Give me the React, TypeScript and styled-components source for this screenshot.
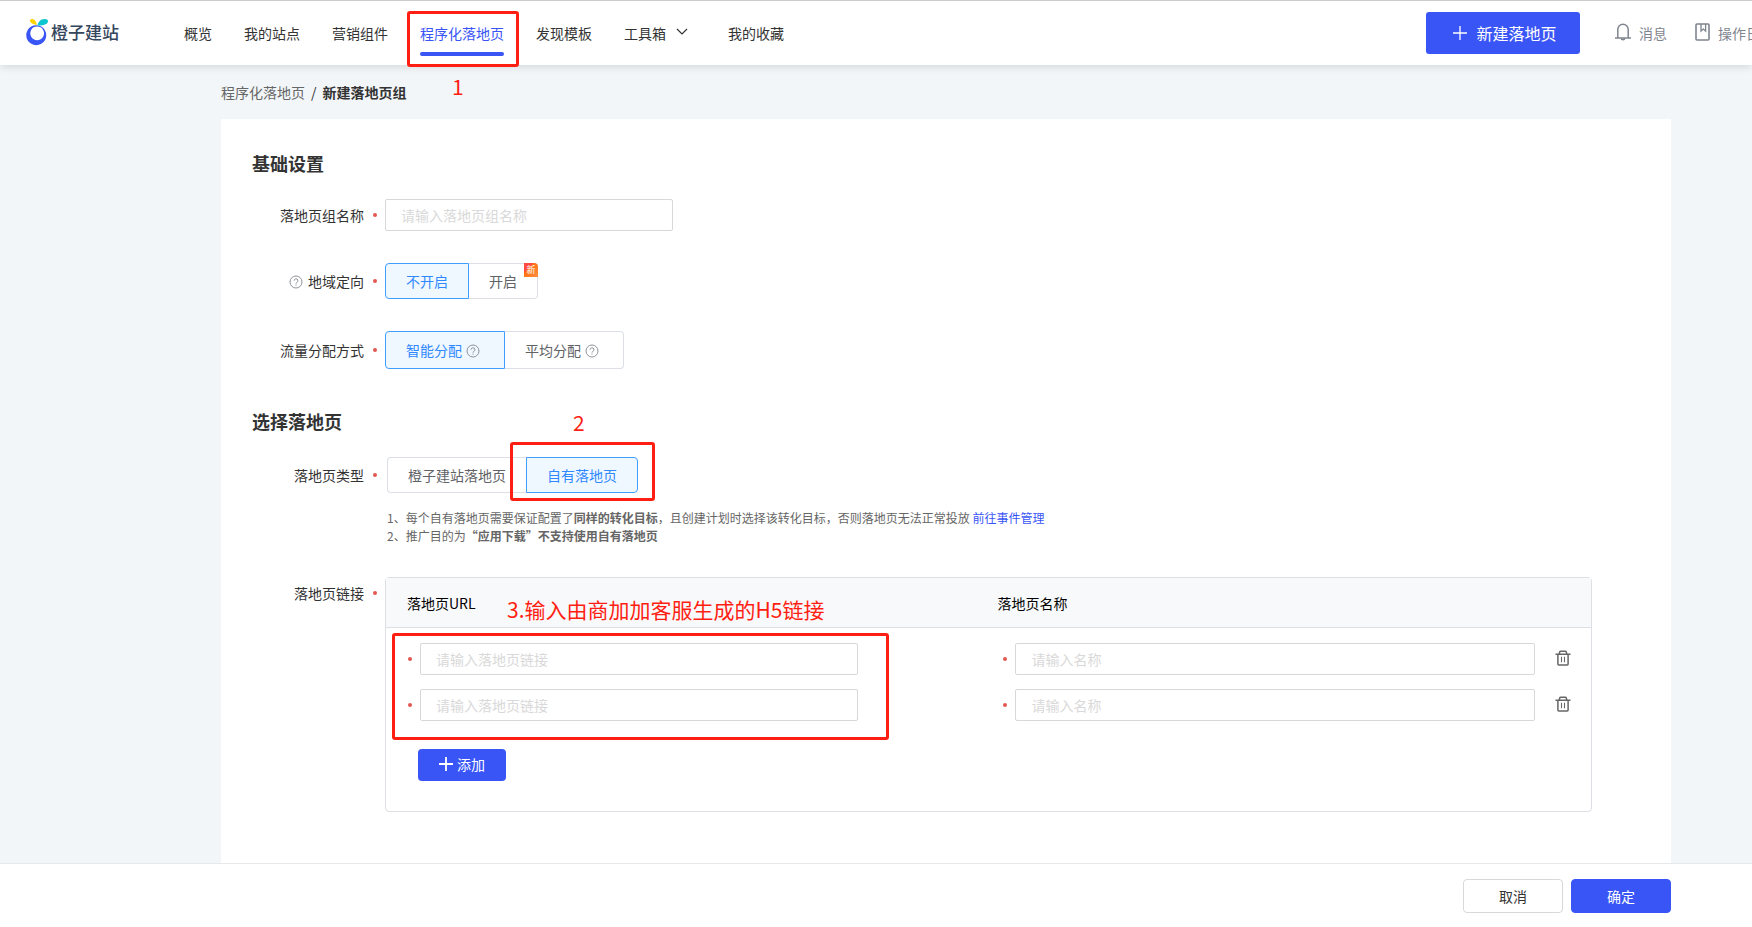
import React, { useState } from 'react';
import styled, { createGlobalStyle, css } from 'styled-components';

const BLUE = '#3955f6';
const RED = '#ff1f12';

const GlobalStyle = createGlobalStyle`
  * { box-sizing: border-box; }
  body {
    margin: 0;
    background: #f2f6f9;
    color: #333;
    font-family: "Noto Sans CJK SC", "Liberation Sans", sans-serif;
    font-size: 14px;
    line-height: 20px;
  }
  button, input { font-family: inherit; font-size: 14px; line-height: 20px; }
  button { cursor: pointer; }
  a { text-decoration: none; }
`;

const Page = styled.div`
  display: flex;
  flex-direction: column;
  min-height: 100vh;
`;

/* ---------- header ---------- */

const Header = styled.header`
  position: relative;
  z-index: 1;
  background: #fff;
  border-top: 1px solid #ccc;
  box-shadow: 0 2px 8px rgba(0, 0, 0, 0.12);
`;

const HeaderClip = styled.div`
  overflow: hidden;
`;

const HeaderInner = styled.div`
  display: flex;
  align-items: center;
  min-width: 1800px;
  height: 64px;
  padding: 0 26px 0 25px;
`;

const Logo = styled.a`
  display: flex;
  align-items: center;
  gap: 2px;
  width: 159px;
  padding-bottom: 2px;
  color: #34465c;
  font-size: 17px;
  font-weight: 500;
`;

const Nav = styled.nav`
  display: flex;
  align-items: center;
  gap: 32px;
  height: 64px;
`;

const NavLink = styled.a<{ $active?: boolean; $menu?: boolean }>`
  position: relative;
  display: flex;
  align-items: center;
  gap: 10px;
  height: 64px;
  color: ${(p) => (p.$active ? BLUE : '#333')};
  ${(p) => p.$menu && css`padding-right: 8px;`}
  svg { margin-bottom: 2px; }
  ${(p) =>
    p.$active &&
    css`
      &::after {
        content: '';
        position: absolute;
        left: 0;
        right: 0;
        bottom: 9px;
        height: 4px;
        border-radius: 2px;
        background: ${BLUE};
      }
    `}
`;

const HeaderTools = styled.div`
  display: flex;
  align-items: center;
  margin-left: auto;
`;

const CreateButton = styled.button`
  display: flex;
  align-items: center;
  justify-content: center;
  gap: 9px;
  width: 154px;
  height: 42px;
  margin-right: 35px;
  padding: 0 0 0 4px;
  border: 0;
  border-radius: 3px;
  background: ${BLUE};
  color: #fff;
  font-size: 16px;
`;

const ToolLink = styled.a`
  display: flex;
  align-items: center;
  gap: 8px;
  color: #7f858f;
  & + & { margin-left: 28px; }
  svg { margin-bottom: 2px; }
`;

/* ---------- content ---------- */

const Main = styled.main`
  display: flex;
  flex: 1;
  flex-direction: column;
  padding: 0 81px 0 221px;
`;

const Breadcrumb = styled.nav`
  display: flex;
  gap: 6px;
  padding: 17px 0;
  a { color: #666; }
`;

const Card = styled.div`
  flex: 1;
  padding: 31px 79px 51px 0;
  background: #fff;
`;

const SectionTitle = styled.h2`
  margin: 0 0 23px;
  padding-left: 31px;
  font-size: 18px;
  line-height: 26px;
  font-weight: 700;
`;

const Section = styled.section`
  & + & { margin-top: 39px; }
`;

const FieldRow = styled.div`
  display: flex;
  & + & { margin-top: 32px; }
`;

const FieldLabel = styled.div<{ $height?: number }>`
  display: flex;
  flex: none;
  align-items: center;
  justify-content: flex-end;
  width: 164px;
  height: ${(p) => p.$height ?? 32}px;
  padding-right: 8px;
  svg { margin-top: 2px; }
`;

const LabelText = styled.label`
  margin: 0 9px 0 5px;
`;

const Dot = styled.i`
  flex: none;
  width: 4px;
  height: 4px;
  border-radius: 50%;
  background: #e25850;
`;

const FieldBody = styled.div<{ $indent?: boolean }>`
  flex: 1;
  min-width: 0;
  padding-left: ${(p) => (p.$indent ? 2 : 0)}px;
`;

const TextInput = styled.input<{ $width: string }>`
  display: block;
  width: ${(p) => p.$width};
  height: 32px;
  padding: 0 15px;
  border: 1px solid #d8d8d8;
  border-radius: 2px;
  outline: 0;
  background: #fff;
  color: #333;
  &::placeholder { color: #d9d9d9; opacity: 1; }
  &:focus { border-color: ${BLUE}; }
`;

const Segmented = styled.div`
  display: flex;
`;

const Segment = styled.label<{ $height: number }>`
  position: relative;
  display: flex;
  align-items: center;
  height: ${(p) => p.$height}px;
  padding: 0 20px 1px;
  border: 1px solid #dcdfe6;
  color: #606266;
  cursor: pointer;
  & + & { border-left: 0; }
  &:first-of-type { border-radius: 4px 0 0 4px; }
  &:last-of-type { border-radius: 0 4px 4px 0; }
  &:has(+ label input:checked) { border-right: 0; }
  &:has(input:checked) {
    border: 1px solid #409eff;
    background: #f0f8ff;
    color: #2f88ff;
  }
  input {
    position: absolute;
    margin: 0;
    opacity: 0;
  }
  svg { margin: 2px 4px 0; }
`;

const NewBadge = styled.span`
  position: absolute;
  top: -1px;
  right: -1px;
  width: 14px;
  height: 14px;
  border-radius: 0 4px 0 0;
  background: linear-gradient(135deg, #ff4a42 35%, #ff6f10 35%, #ff9040);
  color: #fff;
  font-size: 9px;
  line-height: 14px;
  text-align: center;
`;

const Hint = styled.p`
  margin: 16px 0 0;
  color: #666;
  font-size: 12px;
  line-height: 18px;
  a { color: ${BLUE}; }
`;

/* ---------- link table ---------- */

const TableBox = styled.div`
  position: relative;
  padding-bottom: 30px;
  border: 1px solid #dcdfe3;
  border-radius: 4px;
`;

const LinkTable = styled.table`
  width: 100%;
  table-layout: fixed;
  border-collapse: separate;
  border-spacing: 0;
  th {
    height: 50px;
    padding: 0 21px;
    border-bottom: 1px solid #dcdfe3;
    background: #f8f9fb;
    color: #000;
    font-weight: 400;
    text-align: left;
  }
  td { padding: 7px 0; }
  tbody tr:first-child td { padding-top: 15px; }
  .url { width: 49%; }
  .actions { width: 56px; }
`;

const RequiredCell = styled.div<{ $left: number; $right: number }>`
  display: flex;
  align-items: center;
  gap: 8px;
  padding: 0 ${(p) => p.$right}px 0 ${(p) => p.$left}px;
`;

const IconButton = styled.button`
  display: flex;
  margin-left: 20px;
  padding: 0 0 2px;
  border: 0;
  background: none;
  color: #666;
`;

const AddButton = styled.button`
  display: flex;
  align-items: center;
  justify-content: center;
  gap: 4px;
  width: 88px;
  height: 32px;
  margin: 21px 0 0 32px;
  padding: 0 0 2px;
  border: 0;
  border-radius: 4px;
  background: ${BLUE};
  color: #fff;
`;

/* ---------- footer ---------- */

const Footer = styled.footer`
  display: flex;
  align-items: center;
  justify-content: flex-end;
  gap: 8px;
  height: 64px;
  padding-right: 81px;
  border-top: 1px solid #e6e8ea;
  background: #fff;
`;

const FooterButton = styled.button<{ $primary?: boolean }>`
  width: 100px;
  height: 34px;
  padding: 0;
  border: 1px solid ${(p) => (p.$primary ? BLUE : '#d8d8d8')};
  border-radius: 4px;
  background: ${(p) => (p.$primary ? BLUE : '#fff')};
  color: ${(p) => (p.$primary ? '#fff' : '#333')};
`;

/* ---------- tutorial marks laid over the page ---------- */

const Mark = styled.span<{ $top: number; $left: number; $width: string; $height: number }>`
  position: absolute;
  z-index: 2;
  top: ${(p) => p.$top}px;
  left: ${(p) => p.$left}px;
  width: ${(p) => p.$width};
  height: ${(p) => p.$height}px;
  border: 3px solid ${RED};
  border-radius: 3px;
  pointer-events: none;
`;

const MarkText = styled.span<{ $top: number; $left: number }>`
  position: absolute;
  z-index: 2;
  top: ${(p) => p.$top}px;
  left: ${(p) => p.$left}px;
  color: ${RED};
  font-size: 21px;
  line-height: 24px;
  white-space: nowrap;
  pointer-events: none;
`;

const MarkAnchor = styled.div`
  position: relative;
`;

/* ---------- icons ---------- */

const LogoIcon = () => (
  <svg width="24" height="28" viewBox="0 0 24 28" aria-hidden="true">
    <path
      fill={BLUE}
      fillRule="evenodd"
      d="M11.2 7.2a10 10 0 1 0 .1 0zM12.2 8.4a6.900 6.900 0 1 1-.1 0z"
    />
    <path fill="#ffd400" d="M5 2.400C5.400.600 8 .600 9.600 1.900c1.600 1.400 2 3.400 2.100 5.100C9.600 6.400 4.600 5.200 5 2.400z" />
    <path fill="#0bc6cf" d="M12.400 7.600C13.200 3.800 15.600.800 20 1c3 .2 3.500 2 2.600 3.600-1.500 2.600-5.600 3-10.200 3z" />
  </svg>
);

const HelpIcon = () => (
  <svg width="14" height="14" viewBox="0 0 14 14" fill="none" stroke="#909399" aria-hidden="true">
    <circle cx="7" cy="7" r="6" />
    <path d="M5.100 5.700a1.900 1.900 0 1 1 2.700 1.700c-.6.300-.8.600-.8 1.200" />
    <path d="M7 9.600v1.100" />
  </svg>
);

const ChevronIcon = () => (
  <svg width="12" height="8" viewBox="0 0 12 8" fill="none" stroke="#333" strokeWidth="1.200" aria-hidden="true">
    <path d="M1 1l5 5 5-5" />
  </svg>
);

const PlusIcon = ({ size, stroke }: { size: number; stroke: number }) => (
  <svg width={size} height={size} viewBox="0 0 14 14" stroke="#fff" strokeWidth={stroke} aria-hidden="true">
    <path d="M7 0v14M0 7h14" />
  </svg>
);

const BellIcon = () => (
  <svg width="16" height="18" viewBox="0 0 16 18" fill="none" stroke="currentColor" strokeWidth="1.500" aria-hidden="true">
    <path d="M2.800 15V6.500a5.200 5.200 0 0 1 10.400 0V15M0 15h16" />
    <path d="M6.300 15.200a1.700 1.500 0 0 0 3.400 0" />
  </svg>
);

const BookIcon = () => (
  <svg width="15" height="18" viewBox="0 0 15 18" fill="none" stroke="currentColor" strokeWidth="1.600" aria-hidden="true">
    <rect x="1" y="1" width="13" height="16" rx="1" />
    <path d="M6 1v7l2.300-2 2.300 2V1" strokeWidth="1.300" />
  </svg>
);

const TrashIcon = () => (
  <svg width="16" height="16" viewBox="0 0 16 16" fill="none" stroke="currentColor" strokeWidth="1.500" aria-hidden="true">
    <path d="M.5 4.200h15M4.200 4l.600-2.200q.2-.6.800-.6h4.800q.6 0 .8.600l.6 2.200M2.900 4.200V14q0 .9.900.9h8.400q.9 0 .9-.9V4.200" />
    <path d="M6.500 6.800v5.400M9.500 6.800v5.400" strokeWidth="1.100" />
  </svg>
);

/* ---------- parts ---------- */

type Option = { value: string; help?: boolean; isNew?: boolean };

function RadioGroup({ name, label, options, initial, height = 36 }: {
  name: string;
  label: string;
  options: Option[];
  initial: string;
  height?: number;
}) {
  const [value, setValue] = useState(initial);
  return (
    <Segmented role="radiogroup" aria-label={label}>
      {options.map((o) => (
        <Segment key={o.value} $height={height}>
          <input type="radio" name={name} checked={value === o.value} onChange={() => setValue(o.value)} />
          {o.value}
          {o.help && <HelpIcon />}
          {o.isNew && <NewBadge>新</NewBadge>}
        </Segment>
      ))}
    </Segmented>
  );
}

const LinkRow = ({ onRemove }: { onRemove: () => void }) => (
  <tr>
    <td>
      <RequiredCell $left={22} $right={118}>
        <Dot />
        <TextInput $width="100%" placeholder="请输入落地页链接" aria-label="落地页URL" />
      </RequiredCell>
    </td>
    <td>
      <RequiredCell $left={27} $right={0}>
        <Dot />
        <TextInput $width="100%" placeholder="请输入名称" aria-label="落地页名称" />
      </RequiredCell>
    </td>
    <td>
      <IconButton type="button" aria-label="删除" onClick={onRemove}>
        <TrashIcon />
      </IconButton>
    </td>
  </tr>
);

export default function App() {
  const [rows, setRows] = useState([1, 2]);

  return (
    <Page>
      <GlobalStyle />
      <Header>
        <HeaderClip>
          <HeaderInner>
            <Logo href="#">
              <LogoIcon />
              橙子建站
            </Logo>
            <Nav>
              <NavLink href="#">概览</NavLink>
              <NavLink href="#">我的站点</NavLink>
              <NavLink href="#">营销组件</NavLink>
              <NavLink href="#" $active>程序化落地页</NavLink>
              <NavLink href="#">发现模板</NavLink>
              <NavLink href="#" $menu>
                工具箱
                <ChevronIcon />
              </NavLink>
              <NavLink href="#">我的收藏</NavLink>
            </Nav>
            <HeaderTools>
              <CreateButton type="button">
                <PlusIcon size={14} stroke={1.3} />
                新建落地页
              </CreateButton>
              <ToolLink href="#">
                <BellIcon />
                消息
              </ToolLink>
              <ToolLink href="#">
                <BookIcon />
                操作日志
              </ToolLink>
            </HeaderTools>
          </HeaderInner>
        </HeaderClip>
        <Mark $top={10} $left={407} $width="112px" $height={56} />
        <MarkText $top={73} $left={452}>1</MarkText>
      </Header>

      <Main>
        <Breadcrumb aria-label="breadcrumb">
          <a href="#">程序化落地页</a>
          <span>/</span>
          <strong>新建落地页组</strong>
        </Breadcrumb>

        <Card>
          <Section>
            <SectionTitle>基础设置</SectionTitle>
            <FieldRow>
              <FieldLabel>
                <LabelText htmlFor="group-name">落地页组名称</LabelText>
                <Dot />
              </FieldLabel>
              <FieldBody>
                <TextInput id="group-name" $width="288px" placeholder="请输入落地页组名称" />
              </FieldBody>
            </FieldRow>
            <FieldRow>
              <FieldLabel $height={36}>
                <HelpIcon />
                <LabelText as="span">地域定向</LabelText>
                <Dot />
              </FieldLabel>
              <FieldBody>
                <RadioGroup
                  name="region"
                  label="地域定向"
                  initial="不开启"
                  options={[{ value: '不开启' }, { value: '开启', isNew: true }]}
                />
              </FieldBody>
            </FieldRow>
            <FieldRow>
              <FieldLabel $height={38}>
                <LabelText as="span">流量分配方式</LabelText>
                <Dot />
              </FieldLabel>
              <FieldBody>
                <RadioGroup
                  name="traffic"
                  label="流量分配方式"
                  initial="智能分配"
                  height={38}
                  options={[{ value: '智能分配', help: true }, { value: '平均分配', help: true }]}
                />
              </FieldBody>
            </FieldRow>
          </Section>

          <Section>
            <SectionTitle>选择落地页</SectionTitle>
            <FieldRow>
              <FieldLabel $height={36}>
                <LabelText as="span">落地页类型</LabelText>
                <Dot />
              </FieldLabel>
              <FieldBody $indent>
                <MarkAnchor>
                  <RadioGroup
                    name="page-type"
                    label="落地页类型"
                    initial="自有落地页"
                    options={[{ value: '橙子建站落地页' }, { value: '自有落地页' }]}
                  />
                  <Mark $top={-15} $left={123} $width="145px" $height={59} />
                  <MarkText $top={-47} $left={186}>2</MarkText>
                </MarkAnchor>
                <Hint>
                  1、每个自有落地页需要保证配置了<strong>同样的转化目标</strong>，且创建计划时选择该转化目标，否则落地页无法正常投放{' '}
                  <a href="#">前往事件管理</a>
                  <br />
                  2、推广目的为<strong>“应用下载”不支持使用自有落地页</strong>
                </Hint>
              </FieldBody>
            </FieldRow>
            <FieldRow>
              <FieldLabel>
                <LabelText as="span">落地页链接</LabelText>
                <Dot />
              </FieldLabel>
              <FieldBody>
                <TableBox>
                  <LinkTable>
                    <thead>
                      <tr>
                        <th className="url">落地页URL</th>
                        <th>落地页名称</th>
                        <th className="actions" aria-label="操作" />
                      </tr>
                    </thead>
                    <tbody>
                      {rows.map((id) => (
                        <LinkRow key={id} onRemove={() => setRows(rows.filter((r) => r !== id))} />
                      ))}
                    </tbody>
                  </LinkTable>
                  <AddButton type="button" onClick={() => setRows([...rows, Date.now()])}>
                    <PlusIcon size={14} stroke={1.8} />
                    添加
                  </AddButton>
                  <MarkText $top={19} $left={121}>3.输入由商加加客服生成的H5链接</MarkText>
                  <Mark $top={55} $left={6} $width="calc(49% - 93px)" $height={107} />
                </TableBox>
              </FieldBody>
            </FieldRow>
          </Section>
        </Card>
      </Main>

      <Footer>
        <FooterButton type="button">取消</FooterButton>
        <FooterButton type="button" $primary>确定</FooterButton>
      </Footer>
    </Page>
  );
}
